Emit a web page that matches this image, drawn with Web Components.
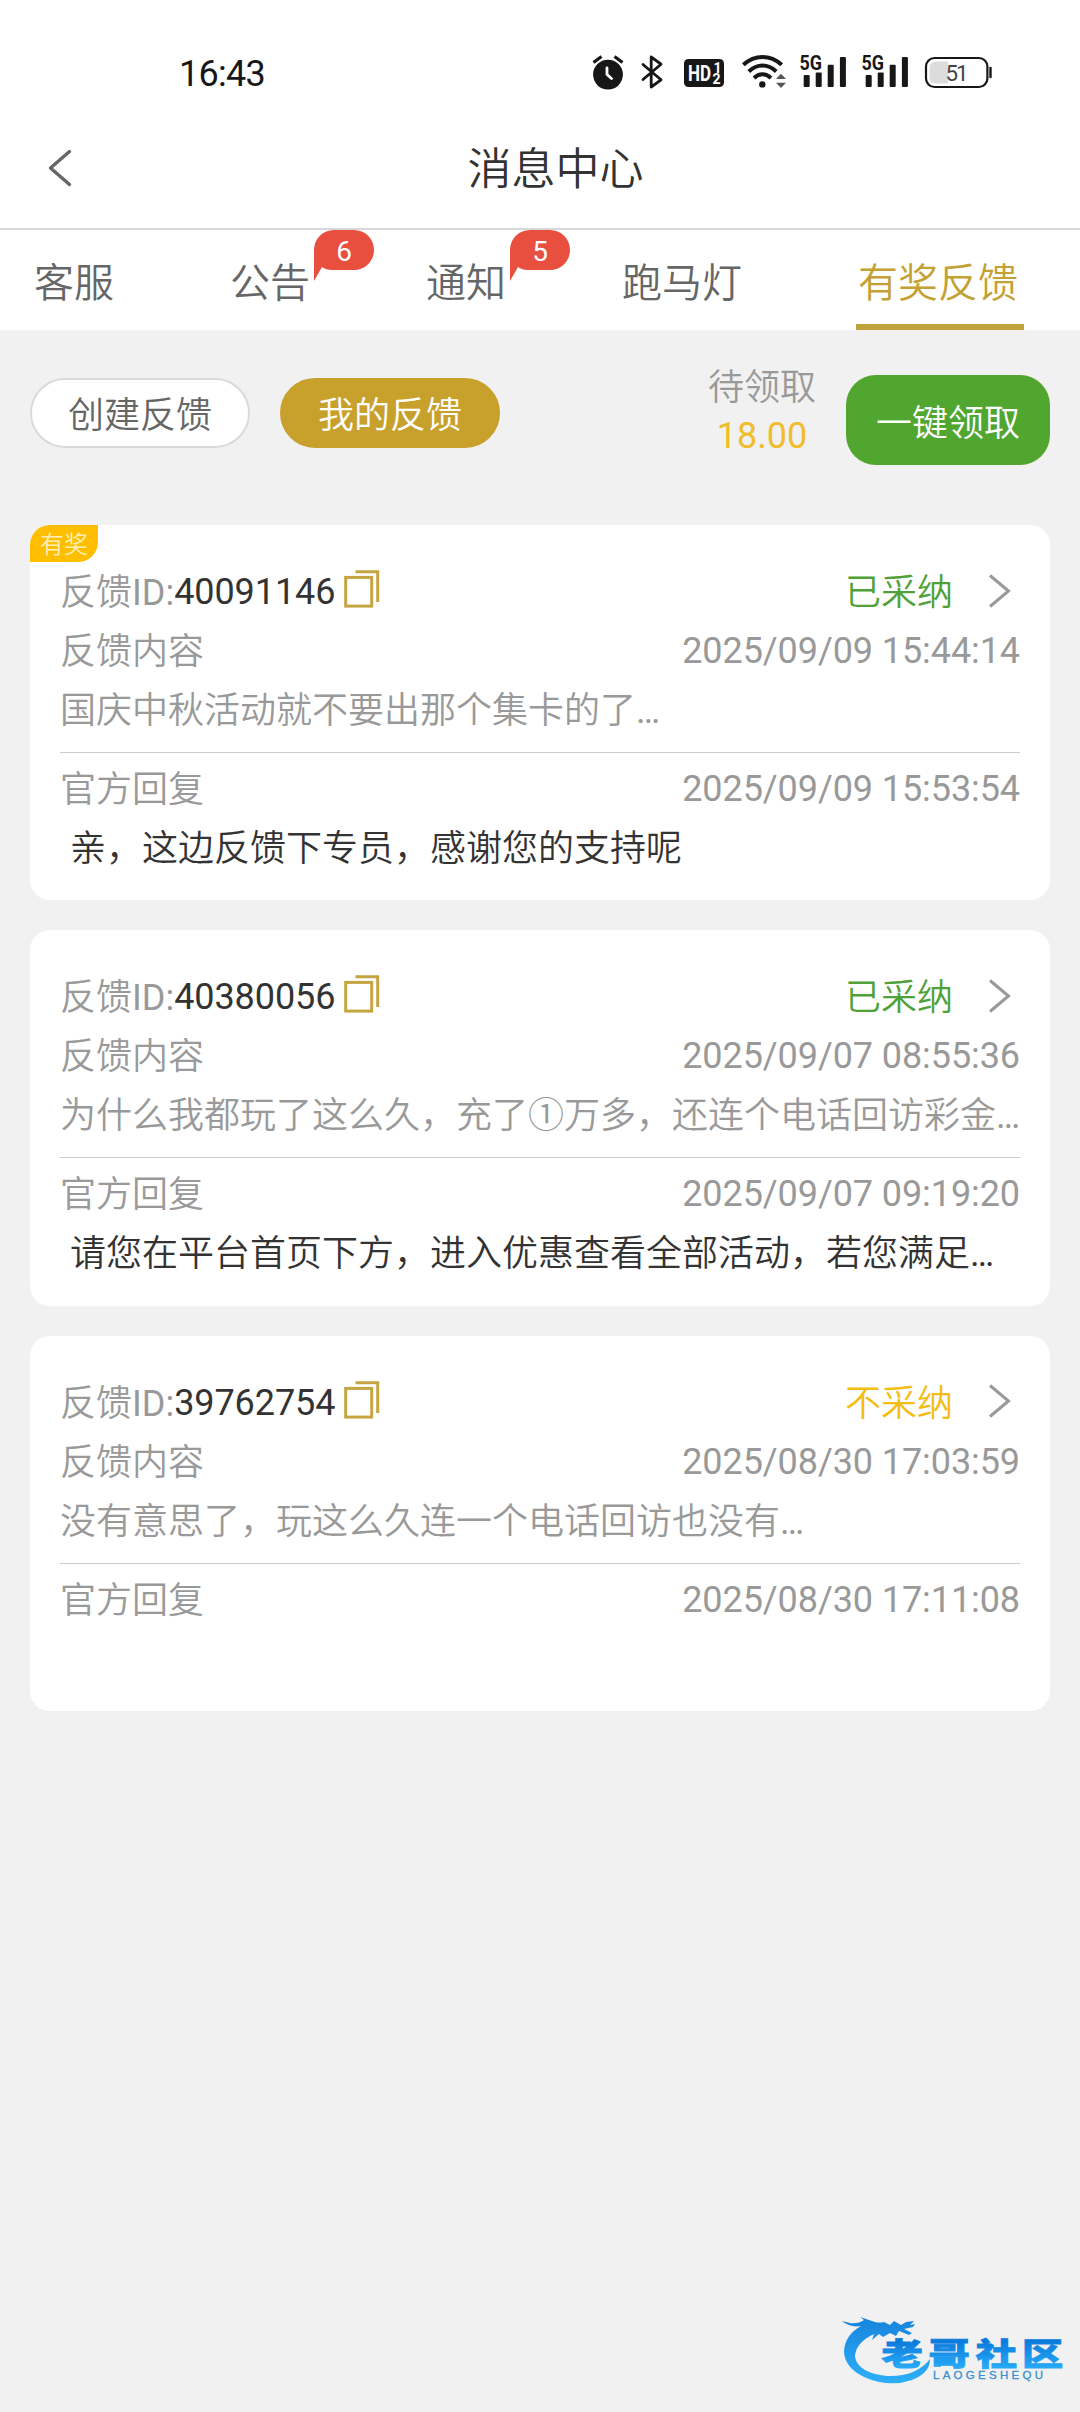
<!DOCTYPE html>
<html lang="zh-CN">
<head>
<meta charset="utf-8">
<title>消息中心</title>
<style>
html,body{margin:0;padding:0;background:#f1f1f1}
body{width:1080px;font-family:Roboto,"Noto Sans CJK SC DemiLight","Noto Sans CJK SC",sans-serif;font-size:36px;color:#333;font-weight:400}
</style>
</head>
<body>
<message-center></message-center>
<script>
const define = (name, html, setup) => {
  const tpl = document.createElement('template');
  tpl.innerHTML = html;
  customElements.define(name, class extends HTMLElement {
    connectedCallback() {
      if (this.shadowRoot) return;
      const root = this.attachShadow({mode: 'open'});
      root.append(tpl.content.cloneNode(true));
      if (setup) setup(this, root);
    }
  });
};

define('signal-icon', `
<style>:host{display:block;width:62px;height:40px}svg{display:block}</style>
<svg width="62" height="40" viewBox="796 50 62 40" fill="#171717">
<g><rect x="803.7" y="75" width="6" height="12" rx="1"/><rect x="815.7" y="72.5" width="6" height="14.5" rx="1"/><rect x="827.7" y="64.7" width="6" height="22.3" rx="1"/><rect x="839.9" y="57" width="6" height="30" rx="1"/></g>
<text x="799.5" y="70" font-family="Roboto" font-weight="700" font-size="20.5" textLength="22.5" lengthAdjust="spacingAndGlyphs">5G</text>
</svg>`);

define('status-bar', `
<style>
:host{display:flex;height:108px;align-items:flex-start;justify-content:space-between;padding:50px 84px 0 179px;box-sizing:border-box;color:#171717}
time{font-size:36px;line-height:48px;font-weight:450;letter-spacing:-.7px}
.icons{display:flex}
svg{display:block}
</style>
<time>16:43</time>
<div class="icons">
<svg width="40" height="40" viewBox="590 50 40 40"><circle cx="608" cy="74.6" r="14.9" fill="#171717"/><path d="M593.5 62.5l8-6M622.5 62.5l-8-6" stroke="#171717" stroke-width="3.2" fill="none"/><path d="M607 68v6.5l4.5 4" stroke="#fff" stroke-width="2.8" stroke-linecap="round" stroke-linejoin="round" fill="none"/></svg>
<svg width="46" height="40" viewBox="630 50 46 40"><path d="M643 64.5l18 15.3-9.8 7.2V57l9.8 7.2-18 15.3" stroke="#171717" stroke-width="2.8" stroke-linecap="round" stroke-linejoin="round" fill="none"/></svg>
<svg width="58" height="40" viewBox="676 50 58 40"><rect x="684" y="59" width="40" height="28" rx="4.500" fill="#171717"/><g fill="#fff" font-family="Roboto" font-weight="700"><text x="688" y="81" font-size="21.500" textLength="23" lengthAdjust="spacingAndGlyphs">HD</text><text x="713.500" y="73" font-size="14">1</text><text x="712.500" y="84.300" font-size="14">2</text></g></svg>
<svg width="62" height="40" viewBox="734 50 62 40"><g stroke="#171717" stroke-width="4" fill="none"><path d="M743.300 64.800Q752 57 762.500 57T781.700 64.800"/><path d="M748.800 71.500Q755 65.500 762.500 65.500T776.200 71.500"/><path d="M754 78Q758 74.200 762.500 74.200T771 78"/></g><circle cx="762.300" cy="84.400" r="3.200" fill="#171717"/><path d="M776 79l5-5.200 5 5.200zM776 82.800l5 5.200 5-5.200z" fill="#555"/></svg>
<signal-icon></signal-icon><signal-icon></signal-icon>
<svg width="76" height="40" viewBox="920 50 76 40"><rect x="926" y="58" width="61.400" height="29" rx="8.500" fill="#fff" stroke="#171717" stroke-width="2.200"/><path d="M948 61.500V83.500H936Q929.600 83.500 929.600 77V68Q929.600 61.500 936 61.500Z" fill="#dcdcdc"/><rect x="989.300" y="66.700" width="2.400" height="11.600" rx="1" fill="#171717"/><text x="945.500" y="80.700" font-family="Roboto" font-size="22.300" textLength="23" fill="#444">51</text></svg>
</div>`);

define('page-header', `
<style>
:host{display:grid;grid-template-columns:120px 1fr 120px;align-items:center;height:122px;border-bottom:2px solid #d7d7d7;box-sizing:border-box}
svg{display:block;margin-left:46px}
h1{margin:4px 0 0;font-size:44px;line-height:60px;font-weight:inherit;color:#333;text-align:center;padding-left:31px}
</style>
<svg width="28" height="44" viewBox="46 147 28 44"><path d="M69.500 152.500L50.500 169L69.500 185.500" stroke="#666" stroke-width="3.400" stroke-linecap="round" stroke-linejoin="round" fill="none"/></svg>
<h1><slot></slot></h1>`);

define('tab-item', `
<style>
:host{display:block;position:relative;height:100px;font-size:40px;line-height:107px;color:#666;white-space:nowrap}
:host([active]){color:#c4a134}
.bar{display:none;position:absolute;left:-2px;width:168px;bottom:0;height:6px;background:#c0a23c}
:host([active]) .bar{display:block}
.badge{display:none;position:absolute;left:84px;top:0;width:60px;height:52px;font-size:28px;line-height:43px;text-align:center;color:#fff}
:host([count]) .badge{display:block}
.badge svg{position:absolute;left:0;top:0}
.badge span{position:relative}
</style>
<slot></slot>
<div class="badge"><svg width="60" height="52" viewBox="0 0 60 52"><path d="M20 0H40A20 20 0 0 1 40 40H18Q12 40 8 37L0 51V20A20 20 0 0 1 20 0Z" fill="#e84f3f"/></svg><span></span></div>
<div class="bar"></div>`, (el, r) => { r.querySelector('.badge span').textContent = el.getAttribute('count') || ''; });

define('tab-nav', `<style>:host{display:flex;gap:116px;height:100px;padding-left:34px;box-sizing:border-box;background:#fff}</style><slot></slot>`);

define('pill-button', `
<style>
:host{display:block;box-sizing:border-box;width:220px;height:70px;border-radius:35px;border:2px solid #dadada;background:#fff;color:#666;font-size:36px;line-height:73px;text-align:center}
:host([primary]){background:#c8a02c;border-color:#c8a02c;color:#fff}
:host([claim]){width:204px;height:90px;border:0;border-radius:30px;background:#50a62f;color:#fff;line-height:98px}
</style><slot></slot>`);

define('feedback-toolbar', `
<style>
:host{display:flex;align-items:flex-start;height:195px;padding:45px 30px 0;box-sizing:border-box}
.left{display:flex;gap:30px;margin-top:3px;flex:1}
.pending{display:flex;flex-direction:column;align-items:center;margin:-11px 30px 0 0;line-height:48px;color:#999}
b{font-weight:400;color:#f0bd2c}
</style>
<div class="left"><pill-button>创建反馈</pill-button><pill-button primary>我的反馈</pill-button></div>
<div class="pending"><span>待领取</span><b>18.00</b></div>
<pill-button claim>一键领取</pill-button>`);

define('copy-icon', `<style>:host{display:block;width:36px;height:38px}svg{display:block}</style>
<svg width="36" height="38" viewBox="0 0 36 38" fill="none" stroke="#c4a542" stroke-width="3"><rect x="1.700" y="7.400" width="26" height="28.700"/><path d="M11.500 1.800H33.700V32"/></svg>`);

define('feedback-card', `
<style>
:host{display:block;position:relative;box-sizing:border-box;height:375.3px;padding:38px 30px 0;background:#fff;border-radius:20px;color:#999;line-height:59px;white-space:nowrap}
.row{display:flex;height:59px;justify-content:space-between}
.id{display:flex;align-items:center}
.num{color:#333}
.num,.t1,.t2{letter-spacing:-.08px}
.cjk{line-height:61px;height:59px}
copy-icon{margin:-7px 0 0 9px}
.state{display:flex;align-items:center;color:#50a238}
:host([rejected]) .state{color:#f3bd12}
.state svg{margin:-4px 9px 0 34px}
.divider{height:1px;background:#ccc;margin:12px 0 7px}
.reply{color:#333;padding-left:10px}
.tag{display:none;position:absolute;left:0;top:0;width:68px;height:37px;border-radius:20px 0;background:#ffbf00;color:#fff0b8;font-size:24px;line-height:41px;text-align:center}
:host([award]) .tag{display:block}
</style>
<div class="tag">有奖</div>
<div class="row"><div class="id"><span class="cjk">反馈ID:</span><span class="num"></span><copy-icon></copy-icon></div>
<div class="state"><span class="st cjk"></span><svg width="24" height="38" viewBox="0 0 24 38"><path d="M3 3.500L21.500 19L3 34.500" fill="none" stroke="#999" stroke-width="3"/></svg></div></div>
<div class="row"><span class="cjk">反馈内容</span><span class="t1"></span></div>
<div class="row cjk"><slot name="content"></slot></div>
<div class="divider"></div>
<div class="row"><span class="cjk">官方回复</span><span class="t2"></span></div>
<div class="reply cjk"><slot name="reply"></slot></div>`, (el, r) => {
  r.querySelector('.num').textContent = el.getAttribute('number');
  r.querySelector('.st').textContent = el.hasAttribute('rejected') ? '不采纳' : '已采纳';
  r.querySelector('.t1').textContent = el.getAttribute('sent');
  r.querySelector('.t2').textContent = el.getAttribute('replied');
});

define('community-logo', `
<style>:host{display:block;position:absolute;left:840px;top:2310px;width:226px;height:78px}svg{display:block}</style>
<svg width="226" height="78" viewBox="840 2310 226 78">
<defs>
<linearGradient id="a" x1="0" y1="2316" x2="0" y2="2385" gradientUnits="userSpaceOnUse"><stop offset="0" stop-color="#1683dc"/><stop offset="1" stop-color="#2eb0fa"/></linearGradient>
<linearGradient id="b" x1="0" y1="-24" x2="0" y2="3" gradientUnits="userSpaceOnUse"><stop offset="0" stop-color="#0c7cdc"/><stop offset="1" stop-color="#27aaf8"/></linearGradient>
</defs>
<path fill="url(#a)" d="M842 2321L850 2323Q858 2324 864 2320L860 2317L875 2322Q879 2323 884 2322L890 2325L894 2321L901 2325L906 2322L914 2321L910 2325L915 2324L913 2327L904 2329L912 2333L909 2335L899 2331L896 2336L890 2333L883 2337L879 2334L872 2340L874 2334Q855 2343 855 2357Q858 2373 887 2376Q916 2377 930 2359Q930 2373 912 2380Q889 2388 864 2377Q844 2367 844 2351Q845 2335 861 2326Q850 2328 842 2321Z"/>
<text transform="translate(881.500 2365) scale(1.290 .97)" x="0 36.400 73 109" y="0" fill="url(#b)" stroke="url(#b)" stroke-width=".9" font-family="Noto Sans CJK SC" font-weight="900" font-size="32">老哥社区</text>
<text x="933" y="2379" font-family="Liberation Sans" font-size="11.500" fill="#3a8fd0" stroke="#3a8fd0" stroke-width=".3" textLength="110">LAOGESHEQU</text>
</svg>`);

define('message-center', `
<style>
:host{display:block;position:relative;width:1080px;height:2412px;overflow:hidden;background:#f1f1f1}
header{background:#fff}
main{display:flex;flex-direction:column;gap:30px;padding:0 30px}
</style>
<header><status-bar></status-bar><page-header>消息中心</page-header></header>
<tab-nav><tab-item>客服</tab-item><tab-item count="6">公告</tab-item><tab-item count="5">通知</tab-item><tab-item>跑马灯</tab-item><tab-item active>有奖反馈</tab-item></tab-nav>
<feedback-toolbar></feedback-toolbar>
<main>
<feedback-card award number="40091146" sent="2025/09/09 15:44:14" replied="2025/09/09 15:53:54"><span slot="content">国庆中秋活动就不要出那个集卡的了…</span><span slot="reply">亲，这边反馈下专员，感谢您的支持呢</span></feedback-card>
<feedback-card number="40380056" sent="2025/09/07 08:55:36" replied="2025/09/07 09:19:20"><span slot="content">为什么我都玩了这么久，充了①万多，还连个电话回访彩金…</span><span slot="reply">请您在平台首页下方，进入优惠查看全部活动，若您满足…</span></feedback-card>
<feedback-card rejected number="39762754" sent="2025/08/30 17:03:59" replied="2025/08/30 17:11:08"><span slot="content">没有意思了，玩这么久连一个电话回访也没有…</span></feedback-card>
</main>
<community-logo></community-logo>`);
</script>
</body>
</html>
